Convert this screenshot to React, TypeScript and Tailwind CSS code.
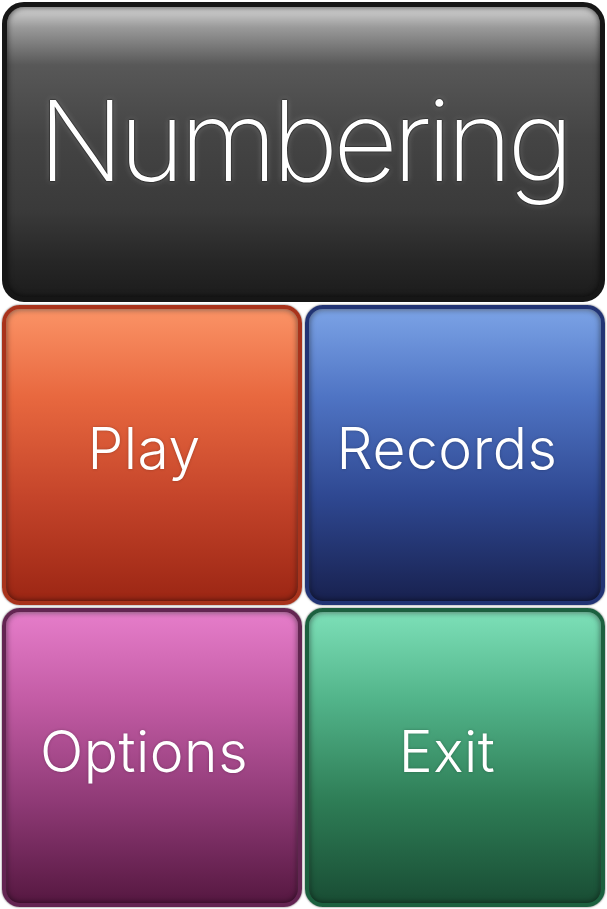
const tiles = [
  {
    label: 'Play',
    className:
      'border-[#a8331c] bg-[linear-gradient(180deg,#fb9366_0%,#e8683f_30%,#c4442a_65%,#9c2614_100%)]',
  },
  {
    label: 'Records',
    className:
      'border-[#223474] bg-[linear-gradient(180deg,#7ba3e6_0%,#4f74c4_30%,#2e4790_65%,#18214f_100%)]',
  },
  {
    label: 'Options',
    className:
      'border-[#632552] bg-[linear-gradient(180deg,#e67dca_0%,#c35ca5_30%,#8f3a76_65%,#561841_100%)]',
  },
  {
    label: 'Exit',
    className:
      'border-[#1c603f] bg-[linear-gradient(180deg,#7de0b8_0%,#52b48a_30%,#2e7d56_65%,#194d34_100%)]',
  },
];

export default function App() {
  return (
    <div className="w-[607px] h-[909px] bg-white p-[2px] flex flex-col gap-[3px] font-['Inter',sans-serif]">
      <div className="h-[300px] rounded-[22px] border-[5px] border-[#161616] bg-[linear-gradient(180deg,#d6d6d6_0%,#9a9a9a_7%,#585858_20%,#444444_45%,#3a3a3a_70%,#262626_88%,#1c1c1c_100%)] shadow-[inset_0_0_6px_rgba(0,0,0,0.7)] flex items-center justify-center pb-[24px]">
        <span className="text-white text-[112px] font-extralight leading-none tracking-[-5px] [text-shadow:0_0_1px_#000,0_0_2px_#000,0_0_6px_rgba(255,255,255,0.25)]">
          Numbering
        </span>
      </div>
      <div className="flex-1 grid grid-cols-2 grid-rows-2 gap-[3px]">
        {tiles.map((tile) => (
          <div
            key={tile.label}
            className={`rounded-[18px] border-[4px] shadow-[inset_0_0_6px_rgba(0,0,0,0.6),inset_0_2px_3px_rgba(255,255,255,0.15),0_0_2px_rgba(0,0,0,0.7)] flex items-center justify-center pr-[16px] pb-[12px] ${tile.className}`}
          >
            <span className="text-white text-[57px] font-light leading-none tracking-[0.5px] [text-shadow:0_0_3px_rgba(0,0,0,0.25)]">
              {tile.label}
            </span>
          </div>
        ))}
      </div>
    </div>
  );
}
